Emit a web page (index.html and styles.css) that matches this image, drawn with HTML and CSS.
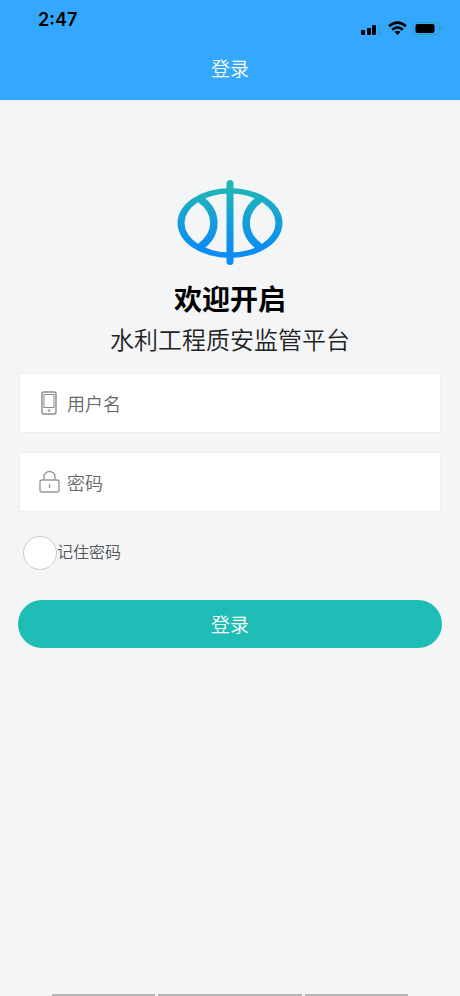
FILE: index.html
```html
<!DOCTYPE html>
<html lang="zh-CN">

<head>
    <meta charset="UTF-8">
    <meta name="viewport" content="width=device-width, initial-scale=1">
    <title>登录</title>
    <link rel="stylesheet" href="styles.css">
</head>

<body>
    <header class="header">
        <div class="status">
            <span class="time">2:47</span>
            <svg class="status-icons" width="84" height="16" viewBox="0 0 84 16">
                <!-- signal -->
                <rect x="1" y="10" width="4" height="5" rx="1" />
                <rect x="7" y="8" width="4" height="7" rx="1" />
                <rect x="12" y="5" width="4" height="10" rx="1" />
                <rect x="18" y="3" width="3" height="12" rx="1" fill="#30a3e6" />
                <!-- wifi -->
                <g fill="none" stroke="#000" stroke-width="2.6">
                    <path d="M29 6.2Q37.500 -1 46 6.200" />
                    <path d="M32.200 9.800Q37.500 5 42.800 9.800" />
                </g>
                <path d="M34.500 12Q37.500 9.500 40.500 12L37.500 15Z" />
                <!-- battery -->
                <rect x="53.500" y="2.500" width="26" height="12" rx="4" fill="none" stroke="#2a9fb8" />
                <rect x="55.500" y="4" width="19" height="9" rx="2" />
                <path d="M81 6q2 2.500 0 5z" fill="#2a86b8" />
            </svg>
        </div>
        <div class="nav-title">登录</div>
    </header>

    <main class="login">
        <svg class="logo" width="108" height="86" viewBox="0 0 108 86">
            <defs>
                <linearGradient id="logoColor" gradientUnits="userSpaceOnUse" x1="0" y1="0" x2="0" y2="86">
                    <stop offset="0.1" stop-color="#1fb5b8" />
                    <stop offset="0.8" stop-color="#0c8cf5" />
                </linearGradient>
            </defs>
            <path fill="url(#logoColor)" fill-rule="evenodd" d="M1.500 43A52.500 35 0 1 1 106.500 43A52.500 35 0 1 1 1.500 43ZM8.500 43A45.500 29.500 0 1 0 99.500 43A45.500 29.500 0 1 0 8.500 43Z" />
            <g fill="none" stroke="url(#logoColor)" stroke-width="7.500">
                <path d="M24 19C42.500 32 42.500 54 24 67" />
                <path d="M84 19C65.500 32 65.500 54 84 67" />
            </g>
            <rect x="50.500" y="0" width="7" height="85" rx="3.500" fill="url(#logoColor)" />
        </svg>
        <h1 class="welcome">欢迎开启</h1>
        <p class="platform">水利工程质安监管平台</p>

        <form class="form">
            <label class="field">
                <svg class="field-icon" width="22" height="26" viewBox="0 0 22 26" fill="none" stroke="#8c8c8c">
                    <rect x="4" y="2" width="14" height="22" rx="2" stroke-width="1.400" />
                    <rect x="6" y="4.500" width="10" height="13" />
                    <circle cx="11" cy="20.500" r="1" />
                </svg>
                <input class="field-input" type="text" placeholder="用户名" aria-label="用户名">
            </label>
            <label class="field">
                <svg class="field-icon" width="22" height="26" viewBox="0 0 22 26" fill="none" stroke="#999" stroke-width="1.400">
                    <rect x="2" y="11" width="19" height="12" rx="2" />
                    <path d="M6 11V8a5.500 5.500 0 0 1 11 0v3M11.500 15v4" />
                </svg>
                <input class="field-input" type="password" placeholder="密码" aria-label="密码">
            </label>
            <label class="remember">
                <input class="remember-check" type="checkbox">
                <span class="remember-text">记住密码</span>
            </label>
            <button class="submit" type="button">登录</button>
        </form>
    </main>

    <footer class="footer">
        <span class="tab-edge"></span>
        <span class="tab-edge wide"></span>
        <span class="tab-edge"></span>
    </footer>
</body>

</html>
```
FILE: styles.css
```css
* {
    box-sizing: border-box;
}

body {
    display: flex;
    flex-direction: column;
    min-height: 100vh;
    margin: 0;
    background-color: #f3f5f7;
    font-family: "Noto Sans CJK SC", sans-serif;
    font-weight: 350;
    color: #222;
}

/* Top bar */
.header {
    height: 100px;
    background-color: #34a8ff;
}

.status {
    display: flex;
    justify-content: space-between;
    align-items: flex-start;
    height: 48px;
    padding: 8px 16px 0 38px;
}

.time {
    font-family: Inter, sans-serif;
    font-size: 18px;
    line-height: 24px;
    font-weight: 600;
    color: #000;
}

.status-icons {
    margin-top: 12px;
}

.nav-title {
    font-size: 19px;
    line-height: 40px;
    text-align: center;
    color: #fff;
}

/* Login form */
.login {
    flex: 1;
    padding: 80px 18px 0;
}

.logo {
    display: block;
    margin: 0 auto 12px;
}

.welcome {
    margin: 0;
    font-size: 28px;
    line-height: 40px;
    font-weight: 700;
    text-align: center;
    color: #000;
}

.platform {
    margin: 0 0 13px;
    font-size: 24px;
    line-height: 42px;
    text-align: center;
}

.field {
    display: flex;
    align-items: center;
    gap: 7px;
    height: 60px;
    margin: 0 1px 19px;
    padding: 0 18px;
    border: 1px solid #eceef0;
    background-color: #fff;
}

.field-input {
    flex: 1;
    min-width: 0;
    height: 40px;
    padding: 0;
    border: none;
    outline: none;
    background: none;
    font-family: inherit;
    font-size: 18px;
    font-weight: 350;
}

.field-input::placeholder {
    color: #666;
    opacity: 1;
}

.remember {
    display: flex;
    height: 34px;
    margin: 24px 5px 30px;
    font-size: 16px;
    line-height: 30px;
    color: #555;
}

.remember-check {
    appearance: none;
    width: 34px;
    height: 34px;
    margin: 0;
    border: 1px solid #ccc;
    border-radius: 50%;
    background-color: #fff;
}

.remember-check:checked {
    background-color: #1fbdb6;
}

.submit {
    display: block;
    width: 100%;
    height: 48px;
    padding: 0 0 2px;
    border: none;
    border-radius: 24px;
    background-color: #1fbdb6;
    font-family: inherit;
    font-size: 19px;
    font-weight: 350;
    color: #fff;
    cursor: pointer;
}

.footer {
    display: flex;
    gap: 3px;
    padding: 0 52px;
}

.tab-edge {
    flex: 103;
    height: 2px;
    background-color: #b4b6b7;
}

.wide {
    flex: 144;
}
```
